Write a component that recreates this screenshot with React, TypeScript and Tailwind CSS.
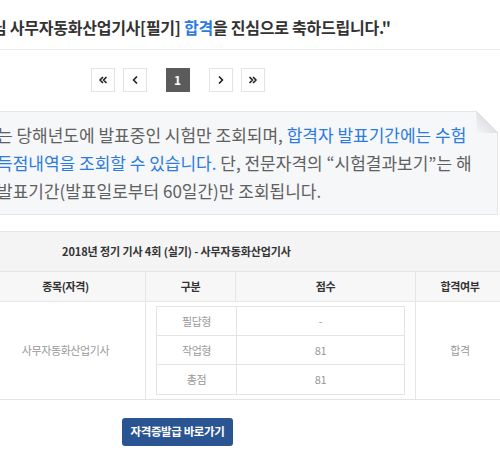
import React from 'react';
import { ChevronLeft, ChevronRight, ChevronsLeft, ChevronsRight } from 'lucide-react';

const font = "font-['Noto_Sans_CJK_KR','Noto_Sans',sans-serif]";

const PageButton: React.FC<{ active?: boolean; className?: string; children: React.ReactNode }> = ({ active, className = '', children }) => (
  <div
    className={`flex h-[24px] w-[24px] items-center justify-center text-[12px] font-bold leading-none ${
      active ? 'bg-[#5b5b5b] text-white' : 'border border-[#e3e3e3] bg-white text-[#222]'
    } ${className}`}
  >
    {children}
  </div>
);

const Fold: React.FC = () => (
  <svg className="absolute right-[-1px] top-[-1px]" width="22" height="22" viewBox="0 0 22 22">
    <defs>
      <linearGradient id="fold" x1="0" y1="1" x2="1" y2="0">
        <stop offset="0" stopColor="#f4f5f7" />
        <stop offset="0.6" stopColor="#dcdee1" />
        <stop offset="1" stopColor="#c9cbce" />
      </linearGradient>
    </defs>
    <path d="M0 0 H22 V22 Z" fill="#ffffff" />
    <path d="M0 0 L22 22 H6 Q2 22 1 18 Z" fill="url(#fold)" />
    <path d="M0 0 L22 22" stroke="#d4d6d9" strokeWidth="0.8" fill="none" />
  </svg>
);

const ScoreRow: React.FC<{ kind: string; score: string; last?: boolean }> = ({ kind, score, last }) => (
  <div className={`flex h-[29px] ${last ? '' : 'border-b border-[#e4e4e4]'}`}>
    <div className="flex w-[80px] items-center justify-center border-r border-[#e4e4e4]">{kind}</div>
    <div className="flex flex-1 items-center justify-center">{score}</div>
  </div>
);

export default function App() {
  return (
    <div className={`relative h-[475px] w-[500px] overflow-hidden bg-white ${font}`}>
      {/* heading */}
      <div className="flex h-[50px] items-center border-b border-[#ececec] pt-[5px]">
        <p className="ml-[-8px] whitespace-nowrap text-[16px] font-bold leading-[20px] tracking-[-0.25px] text-[#333]">
          님 사무자동화산업기사[필기] <span className="text-[#2b7be0]">합격</span>을 진심으로 축하드립니다."
        </p>
      </div>

      {/* pagination */}
      <div className="mt-[18px] flex w-[355px] justify-center">
        <PageButton>
          <ChevronsLeft size={12} strokeWidth={3.5} />
        </PageButton>
        <PageButton className="ml-[8px]">
          <ChevronLeft size={12} strokeWidth={3.5} />
        </PageButton>
        <PageButton active className="ml-[19px] w-[23px]">
          1
        </PageButton>
        <PageButton className="ml-[19px]">
          <ChevronRight size={12} strokeWidth={3.5} />
        </PageButton>
        <PageButton className="ml-[8px]">
          <ChevronsRight size={12} strokeWidth={3.5} />
        </PageButton>
      </div>

      {/* notice */}
      <div className="relative ml-[-20px] mt-[19px] h-[104px] w-[518px] border border-[#e4e6ea] bg-[#f6f7f9] pl-[16px] pt-[9px]">
        <Fold />
        <p className="whitespace-nowrap text-[17px] leading-[28px] tracking-[0px] text-[#606060]">
          는 당해년도에 발표중인 시험만 조회되며, <span className="text-[#2b7be0]">합격자 발표기간에는 수험</span>
          <br />
          <span className="text-[#2b7be0]">득점내역을 조회할 수 있습니다.</span> 단, 전문자격의 “시험결과보기”는 해
          <br />
          발표기간(발표일로부터 60일간)만 조회됩니다.
        </p>
      </div>

      {/* result table */}
      <div className="ml-[-14px] mt-[16px] w-[518px] border-b border-[#e4e4e4] text-[11px] tracking-[-0.4px]">
        <div className="flex h-[41px] items-center border-y border-[#e6e6e6] bg-[#f4f4f4] pl-[76px] font-bold tracking-[-0.1px] text-[#333]">
          2018년 정기 기사 4회 (실기) - 사무자동화산업기사
        </div>
        <div className="flex h-[30px] border-b border-[#e6e6e6] bg-[#f7f7f7] font-bold text-[#333]">
          <div className="flex w-[160px] items-center justify-center border-r border-[#e6e6e6]">종목(자격)</div>
          <div className="flex w-[90px] items-center justify-center border-r border-[#e6e6e6]">구분</div>
          <div className="flex w-[180px] items-center justify-center border-r border-[#e6e6e6]">점수</div>
          <div className="flex flex-1 items-center justify-center">합격여부</div>
        </div>
        <div className="flex h-[97px] text-[#999]">
          <div className="flex w-[160px] items-center justify-center border-r border-[#e6e6e6]">사무자동화산업기사</div>
          <div className="w-[270px] border-r border-[#e6e6e6] px-[10px] pt-[4px]">
            <div className="border border-[#e4e4e4]">
              <ScoreRow kind="필답형" score="-" />
              <ScoreRow kind="작업형" score="81" />
              <ScoreRow kind="총점" score="81" last />
            </div>
          </div>
          <div className="flex flex-1 items-center justify-center">합격</div>
        </div>
      </div>

      {/* certificate button */}
      <div className="mt-[18px] flex w-[355px] justify-center">
        <button className="h-[28px] w-[111px] rounded-[3px] bg-[#2a5592] text-[11.5px] font-bold tracking-[-0.4px] text-white">
          자격증발급 바로가기
        </button>
      </div>
    </div>
  );
}
